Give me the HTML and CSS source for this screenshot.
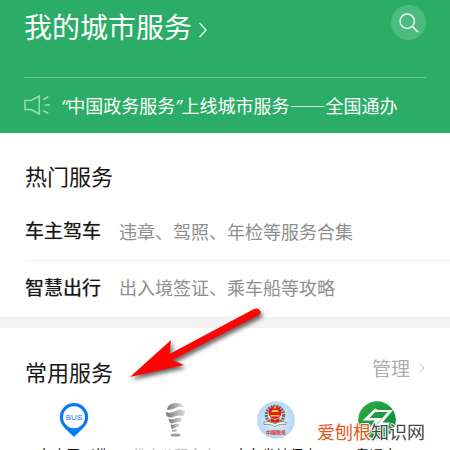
FILE: index.html
```html
<!DOCTYPE html>
<html lang="zh-CN">
<head>
<meta charset="utf-8">
<meta name="viewport" content="width=device-width, initial-scale=1">
<title>城市服务</title>
<link rel="stylesheet" href="styles.css">
</head>
<body>
<div class="page">
  <header class="hero">
    <div class="hero-top">
      <a class="city" href="#">
        <h1>我的城市服务</h1>
        <svg class="city-chevron" viewBox="0 0 10 16" aria-hidden="true"><path d="M1.500 1 8 8l-6.500 7"/></svg>
      </a>
      <button class="search" type="button" aria-label="搜索">
        <svg viewBox="0 0 20 20" aria-hidden="true"><circle cx="8.200" cy="8.200" r="7.200"/><path d="m13.400 13.400 5.200 5.200"/></svg>
      </button>
    </div>
    <a class="notice" href="#">
      <svg class="horn" viewBox="0 0 27 20" aria-hidden="true"><path d="M1 5.500h6L15.300 1v18L7 14.500H1z"/><path d="m19.300 4.500 5-3M20.500 10h5.500M19.300 15.500l5 3"/></svg>
      <span><span class="quote">“</span>中国政务服务<span class="quote">”</span>上线城市服务——全国通办</span>
    </a>
  </header>

  <section class="hot">
    <h2>热门服务</h2>
    <a class="row" href="#"><strong>车主驾车</strong><span>违章、驾照、年检等服务合集</span></a>
    <a class="row" href="#"><strong>智慧出行</strong><span>出入境签证、乘车船等攻略</span></a>
  </section>

  <section class="common">
    <div class="common-head">
      <h2>常用服务</h2>
      <a class="manage" href="#">管理
        <svg viewBox="0 0 6 10" aria-hidden="true"><path d="m1 1 4 4-4 4"/></svg>
      </a>
    </div>
    <nav class="services">
      <a class="service" href="#">
        <svg viewBox="0 0 38 38" aria-hidden="true">
          <path fill="#0878f4" d="M19 2a14.200 14.200 0 0 0-14.200 14.200c0 9 9.600 14.500 14.200 19.800 4.600-5.300 14.200-10.800 14.200-19.800A14.200 14.200 0 0 0 19 2z"/>
          <circle cx="19" cy="16.300" r="11" fill="#fff"/>
          <text class="bus" x="19" y="19.200">BUS</text>
        </svg>
        <span>车来了（佛</span>
      </a>
      <a class="service muted" href="#">
        <svg viewBox="0 0 38 36" aria-hidden="true">
          <defs><linearGradient id="swirl"><stop stop-color="#777"/><stop offset="1" stop-color="#ddd"/></linearGradient></defs>
          <g fill="url(#swirl)">
            <path d="M11 7.500C12 3 16 1 20 1c4 0 6.500 1.500 7.700 4.200-3.200-1-5-.7-8.200.8-3.300 1.400-5.500 2-8.500 1.500z"/>
            <path d="M9.800 10c3.800 1.300 6.200.5 9.600-1 3.600-1.600 6.600-2 9.600.5-.2 2-1 3.600-2 5-2.800-1.600-5-1.300-8.300-.1-3 1-5 1.400-7.200.4-1.200-1.500-1.700-3-1.700-4.800z"/>
            <path d="M12.500 16.700c2.500.8 4.500.4 7-.5 2.700-1 4.400-1 6.600.1-.5 1.700-1 3-2 4.300-2-.8-3.500-.5-5.400.2-1.800.6-3 .8-4.400.3-.9-1.200-1.500-2.700-1.800-4.400z"/>
            <path d="M14.500 22.500c1.500.5 3 .1 4.700-.4 1.700-.5 3-.6 4.400 0l-1.300 3.300c-1.400-.5-2.600-.1-4 .6-1.200.6-1.800 1-2.600 1z"/>
            <path d="M16 28c1.800.4 3.800-1.500 5.500-1l-1 2.500H16z"/>
          </g>
          <ellipse cx="19.500" cy="33" rx="5" ry="1.500" fill="#999"/>
        </svg>
        <span>佛山公积金查</span>
      </a>
      <a class="service" href="#">
        <svg viewBox="0 0 38 38" aria-hidden="true">
          <defs><radialGradient id="sky"><stop stop-color="#e4effa"/><stop offset="1" stop-color="#b5d8f5"/></radialGradient></defs>
          <circle cx="19" cy="19" r="18.800" fill="url(#sky)"/>
          <circle cx="18" cy="14" r="8.700" fill="none" stroke="#73695e" stroke-width="3.200" stroke-dasharray="2 .8"/>
          <circle cx="18" cy="11.500" r="6.500" fill="#e11c13"/>
          <path d="M14 11h8l-1.500-2h-5zM13.500 14h9v1.500h-9z" fill="#f4c84b"/>
          <circle cx="18" cy="6.500" r="1.200" fill="#f4c84b"/>
          <path d="m13.500 17 4.500 2 4.500-2v4h-9z" fill="#ce251c"/>
          <path d="M7 21c4-1 8 0 11 2 3-2 7-3 11-2v2.500c-4-.7-8 .2-11 2.200-3-2-7-2.900-11-2.200z" fill="#f7f7f3" stroke="#76705f" stroke-width=".7"/>
          <text class="seal" x="19" y="33">中国税务</text>
        </svg>
        <span>广东省社保查</span>
      </a>
      <a class="service" href="#">
        <svg viewBox="0 0 38 38" aria-hidden="true">
          <defs><linearGradient id="leaf" x2="1" y2="1"><stop stop-color="#33aa45"/><stop offset="1" stop-color="#078b36"/></linearGradient></defs>
          <circle cx="19" cy="19" r="18.800" fill="url(#leaf)"/>
          <path d="M17 7.500 4.500 19.500H17l-6.500 9 2.500 1L24 17H11.500l5.500-6h12.500L18 24.500h12l2-3h-7.500L35 9H20z" fill="#fff"/>
        </svg>
        <span>粤通卡</span>
      </a>
    </nav>
  </section>

  <svg class="arrow" viewBox="0 0 140 84" aria-hidden="true"><path d="M5 75 46 38l-1.500 14L129 7q4-1.500 6 1.500t-2 5L47.500 58 59 63z"/></svg>
  <div class="watermark"><span>爱刨根</span>知识网</div>
</div>
</body>
</html>
```

FILE: styles.css
```css
* {
  box-sizing: border-box;
}

body {
  margin: 0;
  background: #fff;
  color: #161616;
  font-family: "Noto Sans CJK SC", sans-serif;
}

a {
  color: inherit;
  text-decoration: none;
}

h1,
h2 {
  margin: 0;
  font-weight: 400;
}

.page {
  position: relative;
  height: 100vh;
  overflow: hidden;
}

.hero {
  padding: 0 24px;
  background: #2bad67;
  color: #fff;
}

.hero-top {
  display: flex;
  align-items: flex-start;
  justify-content: space-between;
  height: 78px;
  padding-top: 5px;
  border-bottom: 1px solid #6fc898;
}

.city {
  display: flex;
  align-items: center;
  gap: 6px;
}

.city h1 {
  font-size: 28px;
  line-height: 42px;
}

.city-chevron {
  width: 10px;
  height: 16px;
  margin-top: 8px;
}

.hero svg {
  fill: none;
  stroke: #e4f7ec;
  stroke-width: 1.5;
}

.search {
  display: grid;
  place-items: center;
  width: 35px;
  height: 35px;
  padding: 0;
  border: 0;
  border-radius: 50%;
  background: #4dbb80;
}

.search svg {
  width: 20px;
  height: 20px;
  stroke-linecap: round;
}

.notice {
  display: flex;
  align-items: center;
  gap: 10px;
  height: 55px;
  padding-bottom: 2px;
  font-size: 18px;
  white-space: nowrap;
}

.notice .horn {
  width: 27px;
  height: 20px;
  stroke: #9bd9b6;
}

.quote {
  font-family: "Open Sans", sans-serif;
  font-style: italic;
}

.hot {
  padding: 24px 0 0 25px;
  border-bottom: 11px solid #f3f3f3;
}

h2 {
  font-size: 22px;
  line-height: 36px;
}

.row {
  display: flex;
  align-items: center;
  gap: 18px;
  height: 56px;
  padding-bottom: 6px;
  white-space: nowrap;
}

h2 + .row {
  height: 68px;
  padding-top: 6px;
  padding-bottom: 0;
  border-bottom: 1px solid #ececec;
}

.row strong {
  font-size: 19px;
  font-weight: 400;
  text-shadow: 0 0 1px #666;
}

.row span {
  padding-top: 2px;
  color: #8e8e8e;
  font-size: 18px;
}

.common-head {
  display: flex;
  align-items: flex-start;
  justify-content: space-between;
  padding: 25px 25px 0;
}

.manage {
  display: flex;
  align-items: center;
  gap: 9px;
  color: #adadad;
  font-size: 19px;
  line-height: 30px;
}

.manage svg {
  width: 6px;
  height: 10px;
  fill: none;
  stroke: #bbb;
}

.services {
  display: grid;
  grid-template-columns: repeat(4, 1fr);
  padding: 12px 23px 0;
}

.service {
  display: flex;
  flex-direction: column;
  align-items: center;
  font-size: 14px;
  line-height: 20px;
  white-space: nowrap;
}

.service svg {
  width: 38px;
  height: 38px;
  margin-bottom: 5px;
}

.muted {
  color: #bcbcbc;
}

.bus {
  fill: #0878f4;
  font: 400 8px "Liberation Sans", sans-serif;
  text-anchor: middle;
}

.seal {
  fill: #d92c20;
  font: 700 5px "Noto Sans CJK SC", sans-serif;
  text-anchor: middle;
}

.arrow {
  position: absolute;
  top: 302px;
  left: 125px;
  width: 140px;
  height: 84px;
  fill: #fb0505;
  filter: drop-shadow(2px 3px 2px #0009);
}

.watermark {
  position: absolute;
  right: 25px;
  bottom: 5px;
  color: #444;
  font-size: 18px;
  line-height: 28px;
  text-shadow: 1px 0 #fff, -1px 0 #fff, 0 1px #fff, 0 -1px #fff, 0 0 2px #fff;
}

.watermark span {
  color: #dc5a1c;
}
```
